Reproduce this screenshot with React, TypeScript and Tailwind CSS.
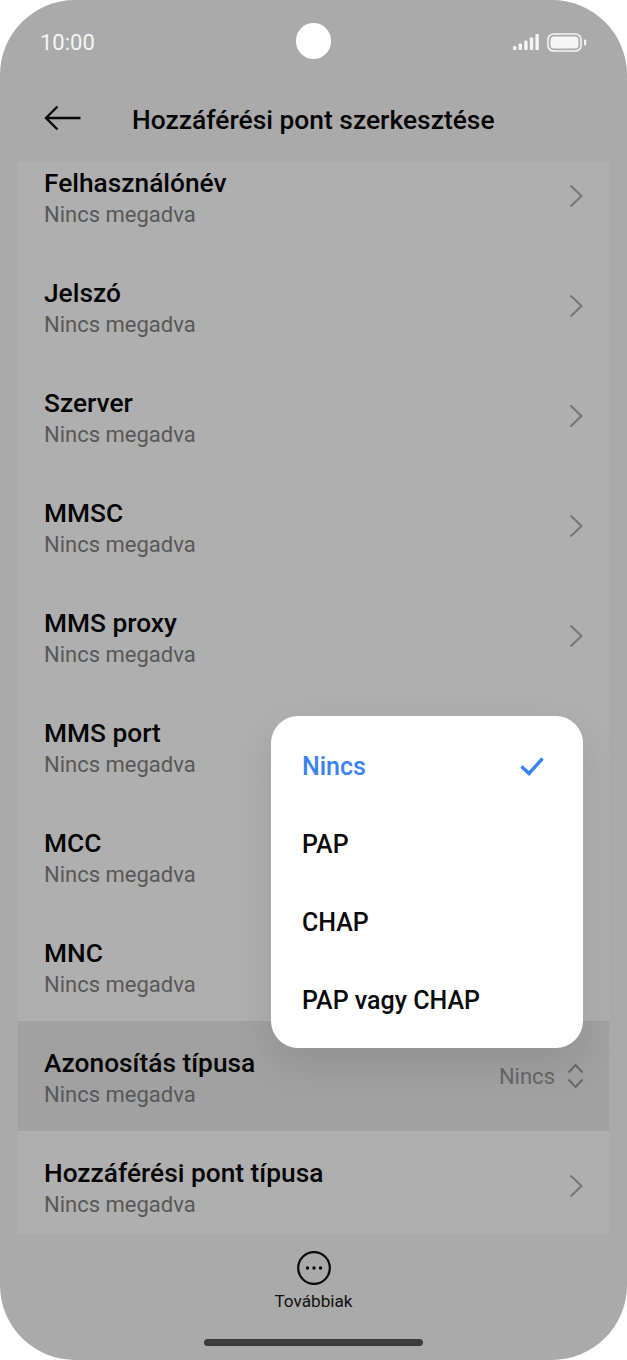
const rows = [
  'Felhasználónév',
  'Jelszó',
  'Szerver',
  'MMSC',
  'MMS proxy',
  'MMS port',
  'MCC',
  'MNC',
  'Azonosítás típusa',
  'Hozzáférési pont típusa',
]

const options = ['Nincs', 'PAP', 'CHAP', 'PAP vagy CHAP']

function Chevron() {
  return (
    <svg width="14" height="24" viewBox="0 0 14 24" fill="none" stroke="#777" strokeWidth="2">
      <path d="M1.5 1.5 12.5 12 1.5 22.5" />
    </svg>
  )
}

function Row({ title }: { title: string }) {
  const selected = title === 'Azonosítás típusa'
  const hidden = title === 'MMS port' || title === 'MCC' || title === 'MNC'
  return (
    <div className={`flex h-[110px] shrink-0 items-center justify-between pl-[26px] ${selected ? 'bg-[#a1a1a1] pr-[25px]' : 'pr-[26px]'}`}>
      <div className="flex flex-col pt-[4px]">
        <span className="text-[26.3px] leading-[34px] font-medium text-[#050505]">{title}</span>
        <span className="text-[22px] leading-[30px] font-normal text-[#585858]">Nincs megadva</span>
      </div>
      {selected ? (
        <div className="flex items-center gap-[12px]">
          <span className="text-[22px] text-[#666666]">Nincs</span>
          <svg width="17" height="26" viewBox="0 0 17 26" fill="none" stroke="#6a6a6a" strokeWidth="2">
            <path d="M1.5 9.5 8.5 2l7 7.5M1.5 16.5l7 7.5 7-7.5" />
          </svg>
        </div>
      ) : hidden ? null : (
        <Chevron />
      )}
    </div>
  )
}

export default function App() {
  return (
    <div className="h-[1360px] w-[627px] bg-white font-['Roboto',sans-serif]">
      <div className="relative flex h-full flex-col overflow-hidden rounded-[75px] bg-[#aaaaaa]">
        {/* Status bar */}
        <div className="flex h-[84px] shrink-0 items-center justify-between pr-[40px] pl-[40px]">
          <span className="text-[22px] text-[#f5f5f5]">10:00</span>
          <div className="flex items-center gap-[8px]">
            <svg width="26" height="16" viewBox="0 0 26 16" fill="#f5f5f5">
              <rect x="0" y="12" width="3.4" height="4" rx="1" />
              <rect x="5.6" y="9.5" width="3.4" height="6.5" rx="1" />
              <rect x="11.2" y="6.5" width="3.4" height="9.5" rx="1" />
              <rect x="16.8" y="3.5" width="3.4" height="12.5" rx="1" />
              <rect x="22.4" y="0" width="3.4" height="16" rx="1" />
            </svg>
            <svg width="40" height="19" viewBox="0 0 40 19" fill="none">
              <rect x="1" y="1" width="33" height="17" rx="5.5" stroke="#f5f5f5" strokeWidth="1.6" />
              <rect x="3.5" y="3.5" width="28" height="12" rx="3.5" fill="#f5f5f5" />
              <rect x="37" y="6.5" width="2.2" height="6" rx="1" fill="#f5f5f5" />
            </svg>
          </div>
        </div>
        <div className="absolute top-[23px] left-[296px] h-[36px] w-[35px] rounded-full bg-white" />

        {/* Header */}
        <div className="flex h-[78px] shrink-0 items-center pl-[44px]">
          <svg width="37" height="26" viewBox="0 0 37 26" fill="none" stroke="#0a0a0a" strokeWidth="2.4" className="mb-[10px]">
            <path d="M36.5 13H2M13.5 1.5 2 13l11.5 11.5" />
          </svg>
          <h1 className="ml-[51px] pb-[4px] text-[26.4px] font-medium text-[#050505]">Hozzáférési pont szerkesztése</h1>
        </div>

        {/* List */}
        <div className="mx-[18px] h-[1072px] shrink-0 overflow-hidden bg-[#afafaf]">
          <div className="-mt-[21px] flex flex-col">
            {rows.map((title) => (
              <Row key={title} title={title} />
            ))}
          </div>
        </div>

        {/* Bottom toolbar */}
        <div className="flex flex-col items-center pt-[17px]">
          <svg width="34" height="34" viewBox="0 0 34 34" fill="none">
            <circle cx="17" cy="17" r="15.8" stroke="#0a0a0a" strokeWidth="2.2" />
            <circle cx="10.5" cy="17" r="1.7" fill="#0a0a0a" />
            <circle cx="17" cy="17" r="1.7" fill="#0a0a0a" />
            <circle cx="23.5" cy="17" r="1.7" fill="#0a0a0a" />
          </svg>
          <span className="mt-[4px] text-[17.2px] leading-[24px] text-[#111]">Továbbiak</span>
          <div className="mt-[26px] h-[7px] w-[219px] rounded-full bg-[#3c3c3c]" />
        </div>

        {/* Dropdown */}
        <div className="absolute top-[716px] left-[271px] flex h-[332px] w-[312px] flex-col rounded-[27px] bg-white pt-[11px] pr-[39px] pl-[31px] shadow-[0_16px_40px_rgba(0,0,0,0.1)]">
          {options.map((option, i) => (
            <div key={option} className="flex h-[78px] items-center justify-between">
              <span className={`pt-[2px] text-[25px] font-medium ${i === 0 ? 'text-[#3b82f0]' : 'text-[#0a0a0a]'}`}>{option}</span>
              {i === 0 && (
                <svg width="24" height="19" viewBox="0 0 24 19" fill="none" stroke="#3b82f0" strokeWidth="3.4">
                  <path d="M1.5 9.5 9 16.5 22.5 1.5" />
                </svg>
              )}
            </div>
          ))}
        </div>
      </div>
    </div>
  )
}
